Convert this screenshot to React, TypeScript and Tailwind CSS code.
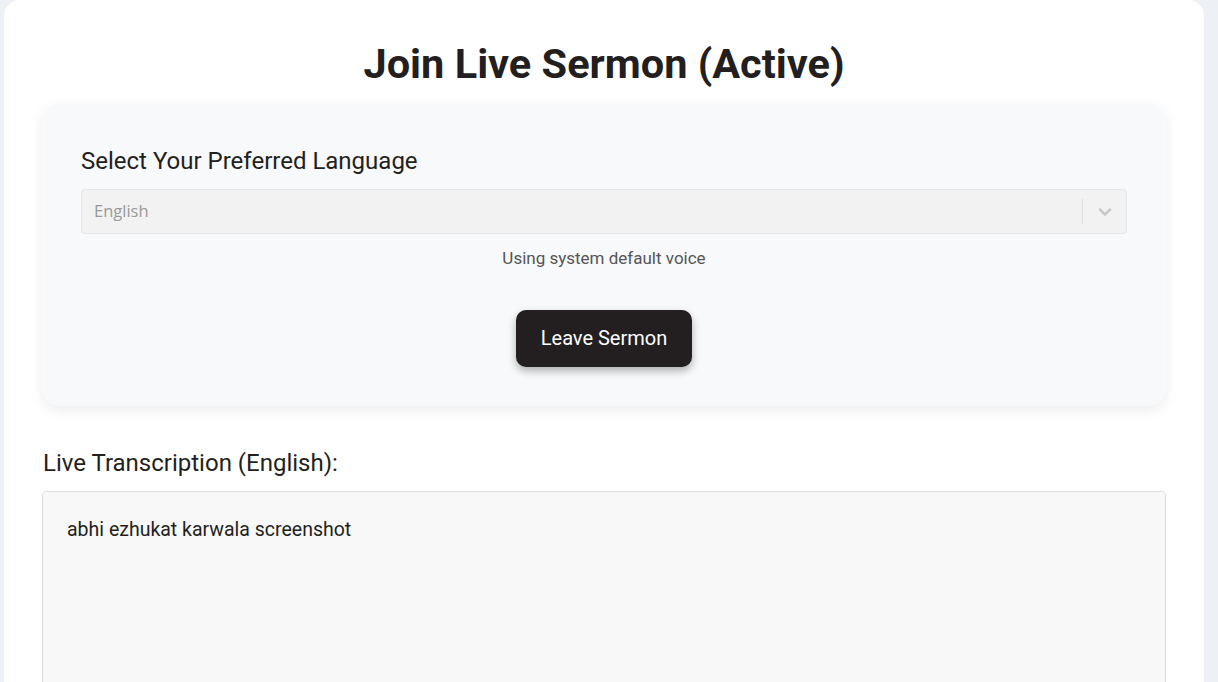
import { ChevronDown } from "lucide-react";

export default function App() {
  return (
    <div className="min-h-screen bg-[#edf0f4] px-1 font-['Roboto',sans-serif] text-[#231f20]">
      <div className="w-[1200px] min-h-[682px] bg-white rounded-t-2xl px-[38px] pt-[37px]">
        <h1 className="text-center text-[41.5px] font-bold leading-[54px]">
          Join Live Sermon (Active)
        </h1>

        <div className="mt-[13px] bg-[#f8f9fa] rounded-2xl shadow-[0_4px_14px_rgba(0,0,0,0.08)] px-[39px] pt-[42px] pb-[39px]">
          <label className="block text-2xl leading-[30px]">
            Select Your Preferred Language
          </label>
          <div className="mt-[13px] h-[45px] flex items-center bg-[#f2f2f2] border border-[#e6e6e6] rounded">
            <span className="flex-1 pl-3 text-[16.5px] text-[#999] font-['Open_Sans',sans-serif]">
              English
            </span>
            <span className="w-px h-[25px] bg-[#dcdcdc]" />
            <span className="w-[43px] flex justify-center text-[#c8c8c8]">
              <ChevronDown size={20} strokeWidth={3} />
            </span>
          </div>
          <p className="mt-[12px] text-center text-[17px] text-[#555]">
            Using system default voice
          </p>
          <div className="mt-[38px] flex justify-center">
            <button className="w-[176px] h-[57px] bg-[#231f20] text-white text-[20px] rounded-[10px] shadow-[0_4px_8px_rgba(0,0,0,0.3)]">
              Leave Sermon
            </button>
          </div>
        </div>

        <h2 className="mt-[42px] pl-px text-2xl leading-[30px]">
          Live Transcription (English):
        </h2>
        <div className="mt-[13px] h-[200px] bg-[#f8f8f8] border border-[#ddd] rounded px-6 pt-[23px] text-[19.5px]">
          abhi ezhukat karwala screenshot
        </div>
      </div>
    </div>
  );
}
